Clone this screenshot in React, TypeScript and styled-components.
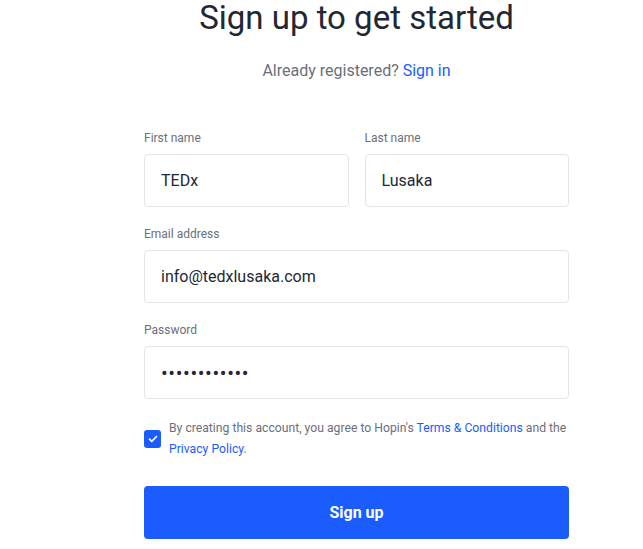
import React from "react";
import styled, { createGlobalStyle } from "styled-components";

const Global = createGlobalStyle`
  html, body { margin: 0; padding: 0; background: #ffffff; }
  body { font-family: Roboto, "Liberation Sans", Arial, sans-serif; }
  * { box-sizing: border-box; }
`;

const Page = styled.div`
  width: 643px;
  display: flex;
  justify-content: flex-start;
  padding-left: 144px;
`;

const Form = styled.form`
  width: 425px;
  display: flex;
  flex-direction: column;
`;

const Title = styled.h1`
  margin: 0;
  font-size: 33px;
  line-height: 36px;
  font-weight: 400;
  color: #222833;
  text-align: center;
`;

const Subtitle = styled.p`
  margin: 22px 0 0;
  font-size: 16px;
  line-height: 26px;
  color: #6b6f7b;
  text-align: center;
`;

const Link = styled.a`
  color: #1b5cff;
  text-decoration: none;
`;

const Fields = styled.div`
  margin-top: 46px;
  display: grid;
  grid-template-columns: 1fr 1fr;
  column-gap: 16px;
  row-gap: 19px;
`;

const Field = styled.label<{ $wide?: boolean }>`
  display: flex;
  flex-direction: column;
  gap: 8px;
  grid-column: ${(p) => (p.$wide ? "1 / span 2" : "auto")};
`;

const LabelText = styled.span`
  font-size: 12px;
  line-height: 16px;
  color: #6b6f7b;
`;

const Input = styled.input<{ $dots?: boolean }>`
  height: 53px;
  width: 100%;
  border: 1px solid #e3e4e8;
  border-radius: 4px;
  padding: 0 16px;
  font-family: Roboto, "Liberation Sans", Arial, sans-serif;
  font-size: ${(p) => (p.$dots ? "20px" : "16px")};
  letter-spacing: ${(p) => (p.$dots ? "0.6px" : "0")};
  color: #222833;
  background: #ffffff;
  outline: none;
`;

const Agree = styled.div`
  margin-top: 19px;
  display: flex;
  align-items: center;
  gap: 8px;
`;

const Box = styled.span`
  flex: none;
  width: 17px;
  height: 18px;
  border-radius: 3px;
  background: #1b5cff;
  display: flex;
  align-items: center;
  justify-content: center;
`;

const AgreeText = styled.p`
  margin: 0;
  font-size: 12.2px;
  line-height: 21px;
  color: #6b6f7b;
`;

const Button = styled.button`
  margin-top: 26px;
  height: 53px;
  width: 100%;
  border: none;
  border-radius: 4px;
  background: #1b5cff;
  color: #ffffff;
  font-family: Roboto, "Liberation Sans", Arial, sans-serif;
  font-size: 16px;
  font-weight: 700;
`;

export default function App() {
  return (
    <>
      <Global />
      <Page>
        <Form onSubmit={(e) => e.preventDefault()}>
          <Title>Sign up to get started</Title>
          <Subtitle>
            Already registered? <Link href="#">Sign in</Link>
          </Subtitle>
          <Fields>
            <Field>
              <LabelText>First name</LabelText>
              <Input defaultValue="TEDx" />
            </Field>
            <Field>
              <LabelText>Last name</LabelText>
              <Input defaultValue="Lusaka" />
            </Field>
            <Field $wide>
              <LabelText>Email address</LabelText>
              <Input defaultValue="info@tedxlusaka.com" />
            </Field>
            <Field $wide>
              <LabelText>Password</LabelText>
              <Input type="password" $dots defaultValue="tedxlusaka12" />
            </Field>
          </Fields>
          <Agree>
            <Box>
              <svg width="10" height="8" viewBox="0 0 10 8" fill="none">
                <path d="M1.5 4.2 L3.8 6.3 L8.5 1.5" stroke="#fff" strokeWidth="1.7" strokeLinecap="round" strokeLinejoin="round" />
              </svg>
            </Box>
            <AgreeText>
              By creating this account, you agree to Hopin's <Link href="#">Terms &amp; Conditions</Link> and the{" "}
              <Link href="#">Privacy Policy</Link>.
            </AgreeText>
          </Agree>
          <Button type="submit">Sign up</Button>
        </Form>
      </Page>
    </>
  );
}
